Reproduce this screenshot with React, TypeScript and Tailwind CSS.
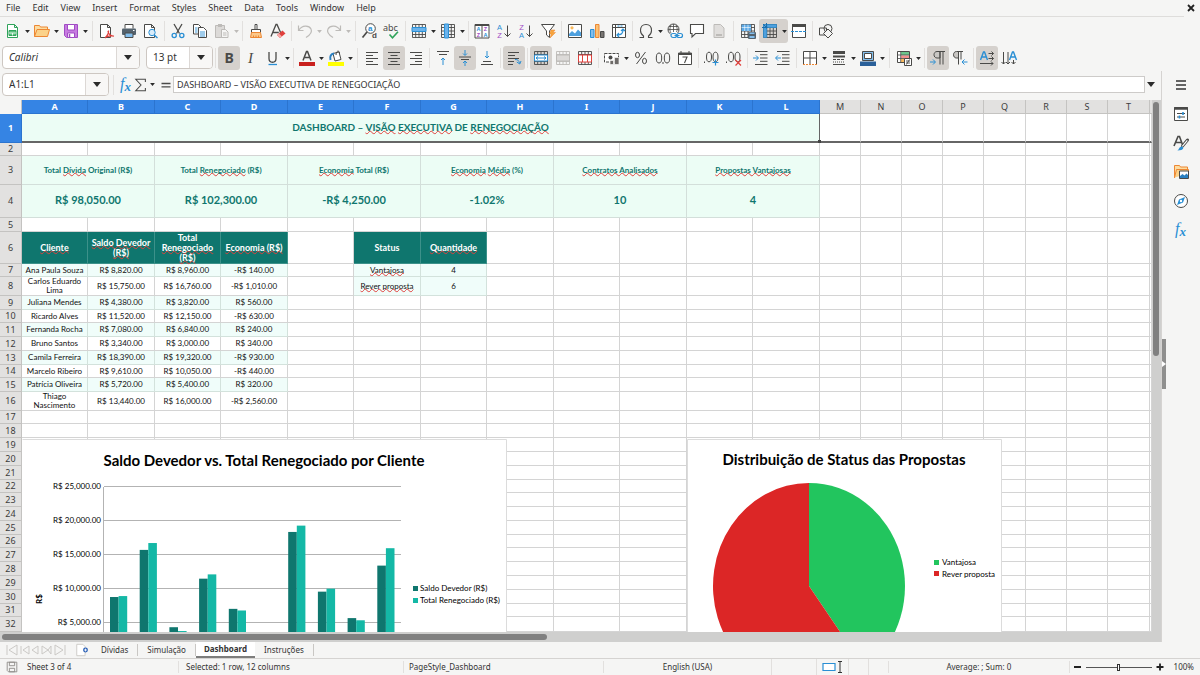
import type { ReactNode } from "react";

const INK = "#4a4a48";
const BLUE = "#2a8fd4";
const SKY = "#83beec";
const ORANGE = "#ed8733";
const RED = "#e0403c";
const GREEN = "#2fa35a";
const PURPLE = "#a04bc4";
const FADED = "#bdbbb8";

/* ---------- icon drawings (16 x 16 grid) ---------- */

const page = (x = 2.5, color = INK) => (
  <path d={`M${x} 1.5h7l3 3v10h-10z M${x + 7} 1.5v3h3`} fill="#fff" stroke={color} />
);

const grid = (color = INK) => (
  <path d="M1.5 1.5h13v13h-13z M1.5 4.5h13 M1.5 8h13 M1.5 11.5h13 M4.7 1.5v13 M8 1.5v13 M11.3 1.5v13" fill="none" stroke={color} strokeWidth="0.9" />
);

const lines = (d: string, color = INK) => <path d={d} stroke={color} fill="none" />;

const ICONS: Record<string, ReactNode> = {
  new: (
    <>
      <path d="M2.5 1.5h7l3 3v10h-10z M9.500 1.500v3h3" fill="#fff" stroke={GREEN} />
      <path d="M4 7.500h7v5h-7z" fill="#5cc07f" stroke={GREEN} />
      <path d="M4 10h7M7.500 10v2.500" stroke="#fff" strokeWidth="0.8" />
    </>
  ),
  open: (
    <>
      <path d="M0.500 13.500v-11h5l1 1.500h7v3" fill="#fcdca0" stroke={ORANGE} />
      <path d="M0.500 13.500l2.500-7h12.500l-2 7z" fill="#fbd28a" stroke={ORANGE} />
    </>
  ),
  save: (
    <>
      <path d="M1.500 1.500h13v13h-11l-2-2z" fill="#c77be0" stroke={PURPLE} />
      <path d="M4.500 1.500h7v5.500h-7z" fill="#fff" stroke={PURPLE} />
      <path d="M4.500 10h7v4.500h-7z" fill="#fff" stroke={PURPLE} />
      <path d="M6.500 11v3" stroke={PURPLE} strokeWidth="1.500" />
    </>
  ),
  pdf: (
    <>
      {page(1.5)}
      <path d="M6 15c2-2 4-5 3.500-7.500M9 8c0 3 3 5.500 6 5M6 14.500c3-2 5-2 9-1.500" fill="none" stroke={RED} strokeWidth="1.200" />
    </>
  ),
  print: (
    <>
      <path d="M4 5.500v-4h8v4" fill="#fff" stroke={INK} />
      <rect x="1" y="5.500" width="14" height="6.500" rx="1" fill="#55636e" />
      <path d="M4 10h8v4.500h-8z" fill={SKY} stroke={INK} />
      <path d="M12 7.500h1.500" stroke="#fff" />
    </>
  ),
  preview: (
    <>
      {page(1.5)}
      <circle cx="9" cy="9.500" r="3.200" fill="#d9ecfa" stroke={BLUE} />
      <path d="M11.300 12l3.200 3" stroke={BLUE} strokeWidth="1.500" />
    </>
  ),
  cut: (
    <>
      <path d="M4 1l5.500 9.500M12 1L6.500 10.500" stroke={INK} strokeWidth="1.300" />
      <circle cx="4.200" cy="12.500" r="2.100" fill="none" stroke={BLUE} strokeWidth="1.300" />
      <circle cx="11.800" cy="12.500" r="2.100" fill="none" stroke={BLUE} strokeWidth="1.300" />
    </>
  ),
  copy: (
    <>
      <path d="M1.500 1.500h5l2.500 2.500v7h-7.500z" fill="#fff" stroke={INK} />
      <path d="M6.500 4.500h5l3 3v7h-8z" fill="#fff" stroke={INK} />
      <path d="M3 5h2.500M3 7h2.500M3 9h2.500M8 9h5M8 11h5M8 13h5" stroke={BLUE} strokeWidth="0.900" />
    </>
  ),
  paste: (
    <>
      <path d="M1.500 2.500h9v12h-9z" fill="#dcdad8" stroke={FADED} />
      <path d="M4 1h4v3h-4z" fill={FADED} />
      <path d="M7.500 6.500h4l2.500 2.500v5.500h-6.500z" fill="#f5f5f4" stroke={FADED} />
      <path d="M9 10h3.500M9 12h3.500" stroke={FADED} />
    </>
  ),
  clone: (
    <>
      <path d="M7 1.500h2v5h-2z" fill="#fff" stroke={INK} />
      <path d="M3.500 6.500h9v3h-9z" fill="#fff" stroke={INK} />
      <path d="M3.500 9.500h9l1 5h-11z" fill="#fbc88a" stroke={ORANGE} />
      <path d="M5.500 14.500v-2M8 14.500v-2M10.500 14.500v-2" stroke={ORANGE} />
    </>
  ),
  clear: (
    <>
      <path d="M1 13.500L6 1.500h1l4 9M2.800 9.500h6" fill="none" stroke={INK} strokeWidth="1.300" />
      <path d="M7 12l5.500-4.500 3 3-5.500 4.500z" fill={RED} />
      <path d="M7 12l2-1.600 3 3-2 1.600z" fill="#f6a9a7" />
    </>
  ),
  undo: <path d="M1.500 2.500v5h5M2 7c3-5 10-5 12-1 1.500 3-1 6-5 8.500" fill="none" stroke={FADED} strokeWidth="1.200" />,
  redo: <path d="M14.500 2.500v5h-5M14 7c-3-5-10-5-12-1-1.500 3 1 6 5 8.500" fill="none" stroke={FADED} strokeWidth="1.200" />,
  find: (
    <>
      <circle cx="8.500" cy="5.500" r="4.800" fill="#fff" stroke={INK} />
      <path d="M5 9l-4.500 5.500" stroke={INK} strokeWidth="1.700" />
      <text x="6" y="8" fontSize="8" fill={BLUE} fontWeight="bold" fontFamily="Liberation Sans">
        a<tspan x="10" y="15" fill={INK}>d</tspan>
      </text>
    </>
  ),
  spell: (
    <>
      <text x="-1" y="7.500" fontSize="9" fill={INK} fontFamily="Noto Sans">abc</text>
      <path d="M5.500 11.500l3 3.300 5.500-6" fill="none" stroke={GREEN} strokeWidth="1.600" />
    </>
  ),
  row: (
    <>
      {grid()}
      <path d="M1 4.500h14v4h-14z" fill="#6bb3ec" stroke={BLUE} />
    </>
  ),
  column: (
    <>
      {grid()}
      <path d="M4.500 1v14h4v-14z" fill="#6bb3ec" stroke={BLUE} />
    </>
  ),
  sort: (
    <>
      <path d="M1 1.500h14v13.500h-14zM8 1.500v13" fill="#fff" stroke={INK} />
      <path d="M1 2h14" stroke={INK} strokeWidth="2" />
      <g fontSize="5.500" fontWeight="bold" fontFamily="Liberation Sans">
        <text x="2.500" y="8" fill={BLUE}>A</text>
        <text x="2.700" y="14.300" fill={PURPLE}>Z</text>
        <text x="9.800" y="8" fill={PURPLE}>Z</text>
        <text x="9.500" y="14.300" fill={BLUE}>A</text>
      </g>
    </>
  ),
  az: (
    <>
      <g fontSize="7.500" fontFamily="Liberation Sans">
        <text x="1" y="6.500" fill={BLUE}>A</text>
        <text x="1.200" y="15.200" fill={PURPLE}>Z</text>
      </g>
      <path d="M11.500 2.500v11M8.500 10.500l3 3 3-3" fill="none" stroke={INK} />
    </>
  ),
  za: (
    <>
      <g fontSize="7.500" fontFamily="Liberation Sans">
        <text x="1.200" y="6.500" fill={PURPLE}>Z</text>
        <text x="1" y="15.200" fill={BLUE}>A</text>
      </g>
      <path d="M11.500 2.500v11M8.500 10.500l3 3 3-3" fill="none" stroke={INK} />
    </>
  ),
  filter: (
    <>
      <path d="M1.500 1.500h13l-5 6.500v6.500l-3-2.500v-4z" fill="#fff" stroke={INK} />
      <path d="M11 7h4l-2 2.500h2.500l-5.500 5.500 1.300-4h-1.800z" fill="#f7a53b" stroke={ORANGE} strokeWidth="0.500" />
    </>
  ),
  image: (
    <>
      <path d="M1.500 1.500h13v13h-13z" fill="#fff" stroke={INK} />
      <path d="M2 13v-2l3-3 3 2.500 3-4 3 3v3.500z" fill="#4ea0de" />
      <circle cx="5" cy="4.800" r="1.600" fill="#f9b95c" />
    </>
  ),
  chart: (
    <>
      <path d="M1.500 6.500h3.500v8h-3.500z" fill={SKY} stroke={BLUE} />
      <path d="M6.500 1.500h3.500v13h-3.500z" fill="#fbc275" stroke={ORANGE} />
      <path d="M11.500 8.500h3.500v6h-3.500z" fill="#787572" stroke={INK} />
    </>
  ),
  pivot: (
    <>
      <path d="M1.500 1.500h13v13h-13zM1.500 4.500h13M4.500 1.500v13" fill="#fff" stroke={INK} />
      <path d="M6.500 12c4 0 5.500-1.500 5.500-5M10 8l2-2 2 2M8 10l-2 2 2 2" fill="none" stroke={BLUE} strokeWidth="1.200" />
      <path d="M6.500 3h6" stroke={BLUE} strokeDasharray="2 1" />
    </>
  ),
  omega: <path d="M1.500 14.500h4v-1.500c-2-1.500-3-3-3-5.500 0-3.500 2-6 5.500-6s5.500 2.500 5.500 6c0 2.500-1 4-3 5.500v1.500h4" fill="none" stroke={INK} strokeWidth="1.100" />,
  link: (
    <>
      <circle cx="6.500" cy="6.500" r="5.500" fill="#fff" stroke={INK} />
      <path d="M1 6.500h11M6.500 1v8M2 3.500h9M4 2c-1.500 3-1.500 6 0 8M9 2c1.500 3 1.500 5 .5 7" fill="none" stroke={INK} strokeWidth="0.800" />
      <rect x="3.500" y="10" width="12" height="5" fill="#f5f5f4" />
      <rect x="4" y="10.500" width="5.500" height="4" rx="2" fill="none" stroke={BLUE} strokeWidth="1.200" />
      <rect x="10" y="10.500" width="5.500" height="4" rx="2" fill="none" stroke={BLUE} strokeWidth="1.200" />
      <path d="M7.500 12.500h5" stroke={BLUE} />
    </>
  ),
  comment: <path d="M1.500 1.500h13v9h-8l-3.500 3.500v-3.500h-1.500z" fill="#fff" stroke={INK} strokeWidth="1.100" />,
  header: (
    <>
      <path d="M3 1.500h6.500l3.500 3.500v9.500h-10z" fill="#e0dedc" stroke={FADED} />
      <path d="M5 11h6v2h-6z" fill={FADED} />
    </>
  ),
  printArea: (
    <>
      {grid()}
      <path d="M1.500 1.500h9.500v6.500h-9.500z" fill="#5ba9e6" />
      <path d="M1.500 4.500h9.500M4.700 1.500v6.500M8 1.500v6.500" stroke="#fff" strokeWidth="0.600" />
      <rect x="8" y="9" width="8" height="7" rx="1" fill="#55636e" />
      <path d="M9.500 9.500h5v1.500h-5zM9.500 13h5v2h-5z" fill={SKY} />
    </>
  ),
  freeze: (
    <>
      {grid()}
      <path d="M1.500 1.500h3.200v13h-3.200zM4.700 1.500h9.800v3h-9.800z" fill="#4ea0de" stroke={BLUE} strokeWidth="0.700" />
      <path d="M0 4.500h5.500M4.500 0v5.500M1 1l3.500 3.500" stroke="#1b6dab" />
    </>
  ),
  split: (
    <>
      <path d="M1.500 1.500h13v13h-13z" fill="#fff" stroke={INK} />
      <path d="M1 2.500h14" stroke={INK} strokeWidth="3" />
      <path d="M0 8.500h16" stroke={BLUE} strokeWidth="1.200" strokeDasharray="3 1" />
    </>
  ),
  shapes: (
    <>
      <path d="M1.500 5h7v7h-7z" fill="none" stroke={INK} />
      <circle cx="10" cy="5.500" r="4" fill="none" stroke={INK} />
      <path d="M10 6l4.500 4.500L10 15l-4.500-4.500z" fill="#f5f5f4" stroke={INK} />
    </>
  ),
  bold: <text x="3.500" y="13" fontSize="14" fontWeight="bold" fill={INK} fontFamily="Noto Sans">B</text>,
  italic: <text x="5" y="13" fontSize="15" fontStyle="italic" fill={INK} fontFamily="Liberation Serif">I</text>,
  underline: (
    <>
      <path d="M4 2v6.500c0 5 7 5 7 0v-6.500" fill="none" stroke={INK} strokeWidth="1.300" />
      <path d="M3.500 14.500h8.500" stroke={BLUE} strokeWidth="1.300" />
    </>
  ),
  fontColor: (
    <>
      <path d="M4 10.500L7.500 1.500h1l3.500 9M5.200 7.500h5.600" fill="none" stroke={INK} strokeWidth="1.500" />
      <path d="M0 12h16v4h-16z" fill="#c9211e" />
    </>
  ),
  fill: (
    <>
      <path d="M5 3.500l6-1.500 2 7.500-6 1.500z" fill="#fff" stroke={INK} />
      <path d="M2.500 10c-1-4 .5-6 3.500-6.500" fill="none" stroke="#2a7fc0" strokeWidth="2" />
      <path d="M8 5c0-5 4-5 3.500-1" fill="none" stroke={INK} />
      <path d="M0 12h16v4h-16z" fill="#ffff00" />
    </>
  ),
  left: lines("M2 2.500h12M2 5.500h7M2 8.500h12M2 11.500h7M2 14.500h12"),
  center: lines("M2 2.500h12M4.500 5.500h7M2 8.500h12M4.500 11.500h7M2 14.500h12"),
  right: lines("M2 2.500h12M7 5.500h7M2 8.500h12M7 11.500h7M2 14.500h12"),
  top: (
    <>
      {lines("M2 1.500h12M4 4.500h8")}
      {lines("M8 15v-7M6 10l2-2 2 2", BLUE)}
    </>
  ),
  middle: (
    <>
      {lines("M2 7h12M4 9.500h8")}
      {lines("M8 0v5M6 3.500l2 2 2-2M8 16v-4.500M6 13l2-2 2 2", BLUE)}
    </>
  ),
  bottom: (
    <>
      {lines("M4 11.500h8M2 14.500h12")}
      {lines("M8 1v7M6 6l2 2 2-2", BLUE)}
    </>
  ),
  wrap: (
    <>
      {lines("M2 2.500h11M2 5.500h7M2 8.500h11M2 11.500h6M2 14.500h5")}
      {lines("M9 9.500c3 0 4 1 4.500 4M10.800 12l3 2 1.200-3", BLUE)}
    </>
  ),
  merge: (
    <>
      {grid()}
      <path d="M1.500 5h13v6h-13z" fill="#fff" stroke={BLUE} />
      {lines("M3 8h10M5 6.500l-2 1.500 2 1.500M11 6.500l2 1.500-2 1.500", BLUE)}
    </>
  ),
  mergeOff: (
    <>
      {grid(FADED)}
      <path d="M1.500 5h13v6h-13z" fill="#dcdad8" stroke={FADED} />
    </>
  ),
  unmerge: (
    <>
      {grid()}
      <path d="M1.500 5h13v7h-13zM5.500 5v7M10.500 5v7" fill="#fff" stroke={RED} />
    </>
  ),
  currency: (
    <>
      <path d="M0.500 3.500h14v8.500h-14z" fill="#fff" stroke={INK} strokeDasharray="3 1" />
      <circle cx="6.500" cy="7.500" r="2" fill={INK} />
      <path d="M6 10.500h3.500v4h-3.500zM10.500 7.500h4.500v7h-4.500z" fill="#6d6a68" stroke="#f5f5f4" strokeWidth="0.700" />
    </>
  ),
  percent: (
    <>
      <ellipse cx="4.500" cy="5" rx="2" ry="2.700" fill="none" stroke={INK} />
      <ellipse cx="11.500" cy="11" rx="2" ry="2.700" fill="none" stroke={INK} />
      <path d="M12.500 2l-9 12" stroke={INK} />
    </>
  ),
  number: (
    <>
      <ellipse cx="4" cy="8" rx="2.700" ry="5" fill="none" stroke={INK} />
      <ellipse cx="12" cy="8" rx="2.700" ry="5" fill="none" stroke={INK} />
      <path d="M8 12v2" stroke={INK} />
    </>
  ),
  date: (
    <>
      <path d="M1.500 3h13v11.500h-13z" fill="#fff" stroke={INK} />
      <path d="M1.500 4h13" stroke={INK} strokeWidth="2" />
      <path d="M4 1v3M12 1v3" stroke={INK} />
      <path d="M5.500 7h4.500l-2.500 6" fill="none" stroke={INK} strokeWidth="1.100" />
    </>
  ),
  addDecimal: (
    <>
      <path d="M0.500 11.500v1.500" stroke={INK} />
      <ellipse cx="5" cy="7" rx="2.500" ry="4.800" fill="none" stroke={INK} />
      <ellipse cx="11.500" cy="7" rx="2.500" ry="4.800" fill="none" stroke={INK} />
      <path d="M8.500 12.500h6M11.500 9.500v6" stroke={BLUE} strokeWidth="1.200" />
    </>
  ),
  removeDecimal: (
    <>
      <path d="M0.500 11.500v1.500" stroke={INK} />
      <ellipse cx="5" cy="7" rx="2.500" ry="4.800" fill="none" stroke={INK} />
      <ellipse cx="11.500" cy="7" rx="2.500" ry="4.800" fill="none" stroke={INK} />
      <path d="M9.500 10l5.500 5.500M15 10l-5.500 5.500" stroke={RED} strokeWidth="1.200" />
    </>
  ),
  indent: (
    <>
      {lines("M2 1.500h12.500M7 4.700h7.500M7 8h7.500M7 11.300h7.500M2 14.500h12.500")}
      {lines("M0 8h5M3 5.500l2.500 2.500-2.500 2.500", BLUE)}
    </>
  ),
  outdent: (
    <>
      {lines("M2 1.500h12.500M7 4.700h7.500M7 8h7.500M7 11.300h7.500M2 14.500h12.500")}
      {lines("M6 8h-5M3 5.500l-2.500 2.500 2.500 2.500", BLUE)}
    </>
  ),
  borders: (
    <>
      <path d="M1.500 14.500v-13h13v13M8 1.500v13M1.500 8h13" fill="#fff" stroke={INK} />
      <path d="M1 14.500h14" stroke={ORANGE} strokeDasharray="2 1" />
    </>
  ),
  borderStyle: (
    <>
      <path d="M2 2.500h12" stroke={INK} strokeWidth="3" />
      <path d="M2 6.500h12" stroke={INK} strokeWidth="2" />
      <path d="M2 9.500h12" stroke={INK} strokeDasharray="3 1" />
      <path d="M2 12h12" stroke={INK} strokeDasharray="1 1" />
      <path d="M2 14.500h12" stroke={INK} />
    </>
  ),
  borderColor: (
    <>
      <path d="M2.500 1.500h11v9h-11z" fill={SKY} stroke={INK} />
      <path d="M4.500 3.500h7v5h-7z" fill="#fff" stroke={INK} />
      <path d="M0 11.500h16v4.500h-16z" fill="#2a6099" />
    </>
  ),
  conditional: (
    <>
      <path d="M1.500 1.500h12v11h-12z" fill="#fff" stroke={INK} />
      <path d="M5 2h8v3h-8z" fill="#6cc58c" />
      <path d="M5 5.500h8v3h-8z" fill="#f3908d" />
      <path d="M5 9h4v3h-4z" fill="#f9b95c" />
      <path d="M1.500 5h12M1.500 8.500h12M4.700 1.500v11" stroke={INK} strokeWidth="0.800" />
      <path d="M8.500 8.500h7v7h-7z" fill="#fff" stroke={INK} />
      <path d="M10 11h4M10 13h4M13.500 9.500l-3 5" stroke={INK} strokeWidth="0.900" />
    </>
  ),
  ltr: (
    <>
      <path d="M10 1.500h-3c-4 0-4 6.500 0 6.500h3z" fill="#c9c7c4" stroke={INK} />
      <path d="M10 1.500v13M13 1.500v13M15 1.500h-7" fill="none" stroke={INK} />
      {lines("M0 12h5M3 9.500l2.500 2.500-2.500 2.500", BLUE)}
    </>
  ),
  rtl: (
    <>
      <path d="M6.500 1.500h-2c-4 0-4 6.500 0 6.500h2z" fill="#c9c7c4" stroke={INK} />
      <path d="M6.500 1.500v13M9 1.500v8M11 1.500h-6" fill="none" stroke={INK} />
      {lines("M15.500 12h-5M12.500 9.500l-2.500 2.500 2.500 2.500", BLUE)}
    </>
  ),
  horizontal: (
    <>
      <path d="M1.500 10l3-8h1l3 8M2.700 7h4.600" fill="none" stroke={BLUE} strokeWidth="1.400" />
      {lines("M9.500 3.500h5M12.500 1.500l2 2-2 2M9.500 8.500h5M12.500 6.500l2 2-2 2M1 13.500h13M12 11.500l2 2-2 2")}
    </>
  ),
  vertical: (
    <>
      <path d="M8.500 10l3-8h1l3 8M9.700 7h4.600" fill="none" stroke={BLUE} strokeWidth="1.400" />
      {lines("M2.500 2v12M0.500 12l2 2 2-2M7 2v12M5 12l2 2 2-2M12.500 10v4M10.500 12l2 2 2-2")}
    </>
  ),
  fx: (
    <text x="2" y="12" fontSize="16" fill={BLUE} fontFamily="Liberation Serif" fontStyle="italic">
      f<tspan dy="2" fontSize="13" fontWeight="bold">x</tspan>
    </text>
  ),
  sigma: <path d="M13 4.500v-3h-11l6 6.500-6 6.500h11v-3" fill="none" stroke={INK} strokeWidth="1.200" />,
  equals: <path d="M2 6h12M2 10.500h12" stroke={INK} strokeWidth="1.800" />,
  menu: <path d="M3 4h10M3 8h10M3 12h10" stroke="#333" strokeWidth="1.500" />,
  properties: (
    <>
      <path d="M1.500 1.500h13v13h-13z" fill="#fff" stroke={INK} />
      <path d="M1 2.500h14" stroke={INK} strokeWidth="2.500" />
      <path d="M4 7.500h8M4 11h8" stroke={INK} />
      <path d="M10 6v3M6.500 9.500v3" stroke={BLUE} strokeWidth="1.600" />
    </>
  ),
  styles: (
    <>
      <path d="M1 11L5 1.500h1.500l3.500 9.500M2.500 7.500h6" fill="none" stroke={INK} strokeWidth="1.600" />
      <path d="M14.500 5l-5 6" stroke={INK} strokeWidth="3" strokeLinecap="round" />
      <path d="M14.300 5.300l-5 6" stroke="#fff" strokeWidth="1.200" />
      <path d="M4 15.500c2 0 2-4 4.500-4s3.500 4-4.500 4z" fill={BLUE} />
    </>
  ),
  gallery: (
    <>
      <path d="M1.500 14v-12.500h5l1 1.500h7v3" fill="#fcdca0" stroke={ORANGE} />
      <path d="M1.500 13.500l2-8h12v4" fill="#fbd28a" stroke={ORANGE} />
      <path d="M6.500 7h9v7.500h-9z" fill="#fff" stroke={INK} />
      <path d="M7 14v-2l2.500-2 2 1.500 2-2 1.500 1.500v3z" fill="#2a7fc0" />
    </>
  ),
  navigator: (
    <>
      <circle cx="8" cy="8" r="6.500" fill="#fff" stroke={INK} />
      <path d="M12 4l-2 5.500-6 2.500 2-5.500z" fill={BLUE} />
      <circle cx="8" cy="8" r="1.200" fill="#fff" />
    </>
  ),
  close: <path d="M6 5l6 6M12 5l-6 6" stroke="#222" strokeWidth="1.800" />,
  savedState: (
    <>
      <path d="M2.500 2.500h11v11h-9.500l-1.500-1.500z" fill="#f5f5f4" stroke="#8b8986" />
      <path d="M5 2.500h6v4h-6zM5 9.500h6v4h-6z" fill="none" stroke="#8b8986" />
    </>
  ),
  addSheet: (
    <>
      <path d="M2 1.500h7l2.500 2.500v10.500h-9.500z" fill="#fff" stroke="#c9c7c4" />
      <circle cx="12" cy="8" r="2.800" fill="#2c62b8" />
      <path d="M10.400 8h3.200M12 6.400v3.200" stroke="#fff" />
    </>
  ),
  selection: <path d="M2 4.500h12v7h-12z" fill="#fff" stroke={BLUE} strokeWidth="1.200" />,
};

function Icon({ name }: { name: string }) {
  return (
    <svg viewBox="0 0 16 16" className="size-4 shrink-0 overflow-visible" aria-hidden="true">
      {ICONS[name]}
    </svg>
  );
}

function Caret({ faded = false, large = false }: { faded?: boolean; large?: boolean }) {
  return (
    <svg viewBox="0 0 8 5" className={large ? "h-[5px] w-2" : "h-[3px] w-[5px]"} aria-hidden="true">
      <path d="M0 0h8L4 5z" fill={faded ? FADED : "#2b2b2b"} />
    </svg>
  );
}

/* ---------- toolbars ---------- */

type Tool = { icon: string; label: string; drop?: boolean; on?: boolean; off?: boolean } | "sep" | "gap";

const STANDARD: Tool[] = [
  { icon: "new", label: "New", drop: true },
  { icon: "open", label: "Open", drop: true },
  { icon: "save", label: "Save", drop: true },
  "gap",
  { icon: "pdf", label: "Export as PDF" },
  { icon: "print", label: "Print" },
  { icon: "preview", label: "Print Preview" },
  "sep",
  { icon: "cut", label: "Cut" },
  { icon: "copy", label: "Copy" },
  { icon: "paste", label: "Paste", drop: true, off: true },
  "sep",
  { icon: "clone", label: "Clone Formatting" },
  { icon: "clear", label: "Clear Formatting" },
  "sep",
  { icon: "undo", label: "Undo", drop: true, off: true },
  { icon: "redo", label: "Redo", drop: true, off: true },
  "gap",
  { icon: "find", label: "Find and Replace" },
  { icon: "spell", label: "Spelling" },
  "sep",
  { icon: "row", label: "Row", drop: true },
  { icon: "column", label: "Column", drop: true },
  "sep",
  { icon: "sort", label: "Sort" },
  { icon: "az", label: "Sort Ascending" },
  { icon: "za", label: "Sort Descending" },
  { icon: "filter", label: "AutoFilter" },
  "sep",
  { icon: "image", label: "Insert Image" },
  { icon: "chart", label: "Insert Chart" },
  { icon: "pivot", label: "Pivot Table" },
  "sep",
  { icon: "omega", label: "Special Character", drop: true },
  { icon: "link", label: "Insert Hyperlink" },
  { icon: "comment", label: "Insert Comment" },
  { icon: "header", label: "Headers and Footers", off: true },
  "gap",
  { icon: "printArea", label: "Define Print Area" },
  { icon: "freeze", label: "Freeze Rows and Columns", drop: true, on: true },
  { icon: "split", label: "Split Window" },
  "sep",
  { icon: "shapes", label: "Show Draw Functions" },
];

const FORMATTING: Tool[] = [
  { icon: "bold", label: "Bold", on: true },
  { icon: "italic", label: "Italic" },
  { icon: "underline", label: "Underline", drop: true },
  "sep",
  { icon: "fontColor", label: "Font Color", drop: true },
  { icon: "fill", label: "Background Color", drop: true },
  "gap",
  { icon: "left", label: "Align Left" },
  { icon: "center", label: "Center Horizontally", on: true },
  { icon: "right", label: "Align Right" },
  "sep",
  { icon: "top", label: "Align Top" },
  { icon: "middle", label: "Center Vertically", on: true },
  { icon: "bottom", label: "Align Bottom" },
  "sep",
  { icon: "wrap", label: "Wrap Text", on: true },
  "sep",
  { icon: "merge", label: "Merge and Center", on: true },
  { icon: "mergeOff", label: "Merge Cells", off: true },
  { icon: "unmerge", label: "Unmerge Cells" },
  "sep",
  { icon: "currency", label: "Format as Currency", drop: true },
  { icon: "percent", label: "Format as Percent" },
  { icon: "number", label: "Format as Number" },
  { icon: "date", label: "Format as Date" },
  "sep",
  { icon: "addDecimal", label: "Add Decimal Place" },
  { icon: "removeDecimal", label: "Delete Decimal Place" },
  "sep",
  { icon: "indent", label: "Increase Indent" },
  { icon: "outdent", label: "Decrease Indent" },
  "sep",
  { icon: "borders", label: "Borders", drop: true },
  { icon: "borderStyle", label: "Border Style", drop: true },
  { icon: "borderColor", label: "Border Color", drop: true },
  "gap",
  { icon: "conditional", label: "Conditional Formatting", drop: true },
  "sep",
  { icon: "ltr", label: "Left-To-Right", on: true },
  { icon: "rtl", label: "Right-To-Left" },
  "sep",
  { icon: "horizontal", label: "Text direction from left to right", on: true },
  { icon: "vertical", label: "Text direction from top to bottom" },
];

function Tools({ items }: { items: Tool[] }) {
  return (
    <>
      {items.map((t, i) =>
        typeof t === "string" ? (
          <span key={i} className={t === "sep" ? "flex w-[5px] shrink-0 justify-center" : "flex w-[7px] shrink-0 justify-center"}>
            <span className="h-5 w-px bg-[#e2e0de]" />
          </span>
        ) : (
          <span key={i} className={t.on ? "flex h-6 shrink-0 rounded-[3px] bg-[#d5d1cd]" : "flex h-6 shrink-0"}>
            <button type="button" aria-label={t.label} aria-pressed={t.on} disabled={t.off} className="flex w-[22px] items-center justify-center">
              <Icon name={t.icon} />
            </button>
            {t.drop && (
              <button type="button" aria-label={`${t.label} options`} disabled={t.off} className="flex w-[7px] items-center justify-center pt-0.5">
                <Caret faded={t.off} />
              </button>
            )}
          </span>
        ),
      )}
    </>
  );
}

function Combo({ label, value, className, italic }: { label: string; value: string; className: string; italic?: boolean }) {
  return (
    <div className={`flex h-[23px] shrink-0 overflow-hidden rounded border border-[#cdc7c2] bg-white ${className}`}>
      <input aria-label={label} defaultValue={value} className={italic ? "min-w-0 flex-1 px-1.5 italic outline-none" : "min-w-0 flex-1 px-1.5 outline-none"} />
      <button type="button" aria-label={`${label} list`} className="flex w-[23px] items-center justify-center border-l border-[#dcd8d5] bg-[#f8f7f6]">
        <Caret large />
      </button>
    </div>
  );
}

/* ---------- sheet ---------- */

const LETTERS = "ABCDEFGHIJKLMNOPQRST".split("");
const COL_WIDTHS = [66, 67, 66, 67, 66, 67, 66, 67, 66, 67, 66, 67, 41, 41, 41, 41, 42, 41, 41, 42];
const ROW_HEIGHTS = [29, 13, 29, 33, 14, 32, 13, 19, 14, 13, 14, 14, 14, 13, 14, 19, 13, 14, 14, 14, 14, 13, 14, 14, 14, 13, 14, 14, 14, 14, 13, 15];

const CLIENTS: [string, number, number][] = [
  ["Ana Paula Souza", 8820, 8960],
  ["Carlos Eduardo Lima", 15750, 16760],
  ["Juliana Mendes", 4380, 3820],
  ["Ricardo Alves", 11520, 12150],
  ["Fernanda Rocha", 7080, 6840],
  ["Bruno Santos", 3340, 3000],
  ["Camila Ferreira", 18390, 19320],
  ["Marcelo Ribeiro", 9610, 10050],
  ["Patrícia Oliveira", 5720, 5400],
  ["Thiago Nascimento", 13440, 16000],
];

const money = (n: number) =>
  `${n < 0 ? "-" : ""}R$ ${Math.abs(n).toLocaleString("en-US", { minimumFractionDigits: 2 })}`;

function W({ children }: { children: ReactNode }) {
  return (
    <span className="underline decoration-[#e0403c] decoration-wavy decoration-1 underline-offset-[-1px] [text-decoration-skip-ink:none]">{children}</span>
  );
}

type CellSpec = { span?: number; content?: ReactNode; style: string };

const KPIS: [ReactNode, string][] = [
  [<>Total <W>Dívida</W> Original (R$)</>, "R$ 98,050.00"],
  [<>Total <W>Renegociado</W> (R$)</>, "R$ 102,300.00"],
  [<><W>Economia</W> Total (R$)</>, "-R$ 4,250.00"],
  [<><W>Economia</W> <W>Média</W> (%)</>, "-1.02%"],
  [<W>Contratos Analisados</W>, "10"],
  [<W>Propostas Vantajosas</W>, "4"],
];

const EMPTY = "border-[#d4d4d4] border-b";
const HEAD = "border-[#3c918a] border-b bg-[#0f766e] font-bold text-white text-[9px] leading-[10px]";
const MINT = "border-[#d3e2dc] border-b bg-[#f0fdfa] text-[8px] leading-[9px] text-[#111]";
const PLAIN = "border-[#d4d4d4] border-b bg-white text-[8px] leading-[9px] text-[#111]";

function cellsFor(row: number): CellSpec[] {
  const out: CellSpec[] = [];
  if (row === 1) {
    out.push({
      span: 12,
      style: "relative border-[#666] border-b-2 bg-[#ecfdf5] pb-0.5 text-[10px] leading-4 font-bold text-[#0f766e]",
      content: (
        <>
          DASHBOARD – <W>VISÃO</W> <W>EXECUTIVA</W> DE <W>RENEGOCIAÇÃO</W>
          <span className="absolute -right-0.5 -bottom-0.5 size-[3px] bg-[#444]" />
        </>
      ),
    });
  } else if (row === 3 || row === 4) {
    KPIS.forEach(([name, value]) =>
      out.push(
        row === 3
          ? { span: 2, content: name, style: "border-[#d3dfda] border-b bg-[#ecfdf5] text-[8px] leading-3 font-bold text-[#0f766e]" }
          : { span: 2, content: value, style: "border-[#d3dfda] border-b bg-[#ecfdf5] pb-0.5 text-[11px] leading-4 font-bold text-[#0f766e]" },
      ),
    );
  } else {
    for (let c = 0; c < 12; c++) out.push({ style: EMPTY });
    if (row === 6) {
      [
        <W>Cliente</W>,
        <W>Saldo Devedor (R$)</W>,
        <>Total <W>Renegociado (R$)</W></>,
        <W>Economia (R$)</W>,
      ].forEach((content, c) => (out[c] = { content, style: HEAD }));
      out[5] = { content: "Status", style: HEAD };
      out[6] = { content: <W>Quantidade</W>, style: HEAD };
    }
    if (row >= 7 && row <= 16) {
      const [name, debt, total] = CLIENTS[row - 7];
      const style = row % 2 ? MINT : PLAIN;
      [name, money(debt), money(total), money(debt - total)].forEach((content, c) => (out[c] = { content, style }));
    }
    if (row === 7 || row === 8) {
      out[5] = { content: <W>{row === 7 ? "Vantajosa" : "Rever proposta"}</W>, style: MINT };
      out[6] = { content: row === 7 ? "4" : "6", style: MINT };
    }
  }
  for (let c = 12; c < 21; c++) out.push({ style: row === 1 ? "border-r-[#d4d4d4] border-b-2 border-b-[#666]" : EMPTY });
  return out;
}

function Sheet() {
  return (
    <table className="w-full table-fixed border-separate border-spacing-0 bg-white text-center">
      <colgroup>
        <col className="w-[22px]" />
        {COL_WIDTHS.map((w, i) => (
          <col key={i} style={{ width: w }} />
        ))}
        <col />
      </colgroup>
      <thead>
        <tr className="h-[14px] font-[Noto_Sans] text-[9px] leading-3">
          <th className="border-r border-[#c4c3c1] bg-[#f5f5f4] p-0" />
          {LETTERS.map((l, i) => (
            <th
              key={l}
              className={
                i < 12
                  ? "border-r border-b border-[#2b74cf] bg-[#3584e4] p-0 font-bold text-white"
                  : "border-r border-b border-[#c4c3c1] bg-[#e2e1e0] p-0 font-normal text-[#3c3c3c]"
              }
            >
              {l}
            </th>
          ))}
          <th className="border-b border-[#c4c3c1] bg-[#e2e1e0] p-0" />
        </tr>
      </thead>
      <tbody>
        {ROW_HEIGHTS.map((h, i) => (
          <tr key={i} style={{ height: h }}>
            <th
              className={
                i === 0
                  ? "border-r border-b border-[#2b74cf] bg-[#3584e4] p-0 font-[Noto_Sans] text-[9px] leading-3 font-bold text-white"
                  : "border-r border-b border-[#c4c3c1] bg-[#e2e1e0] p-0 font-[Noto_Sans] text-[9px] leading-3 font-normal text-[#3c3c3c]"
              }
            >
              {i + 1}
            </th>
            {cellsFor(i + 1).map((c, k) => (
              <td key={k} colSpan={c.span} className={`border-r px-0 pt-0 align-middle ${c.style}`}>
                {c.content}
              </td>
            ))}
          </tr>
        ))}
      </tbody>
    </table>
  );
}

/* ---------- charts ---------- */

function BarChart() {
  const left = 82;
  const zero = 218;
  const step = 34;
  const y = (v: number) => zero - (v / 5000) * step;
  return (
    <svg viewBox="0 0 485 260" width="485" height="260" className="bg-white" role="img" aria-label="Saldo Devedor vs. Total Renegociado por Cliente">
      <path d="M0.500 0.500h484v260" fill="none" stroke="#dcdcdc" />
      <text x="242" y="27" textAnchor="middle" fontSize="15" fontWeight="bold">Saldo Devedor vs. Total Renegociado por Cliente</text>
      {[5000, 10000, 15000, 20000, 25000].map((v) => (
        <g key={v}>
          <path d={`M${left} ${y(v) - 0.5}h297`} stroke="#b3b3b3" />
          <text x={left - 3} y={y(v) + 2} textAnchor="end" fontSize="8">{money(v)}</text>
        </g>
      ))}
      <path d={`M${left - 0.5} ${y(25000)}V${zero}`} stroke="#b3b3b3" />
      {CLIENTS.map(([name, debt, total], i) => (
        <g key={name}>
          <rect x={left + 6 + i * 29.7} y={y(debt)} width="8.600" height={zero - y(debt)} fill="#0f766e" />
          <rect x={left + 14.6 + i * 29.7} y={y(total)} width="8.600" height={zero - y(total)} fill="#14b8a6" />
        </g>
      ))}
      <text transform="translate(20 160) rotate(-90)" textAnchor="middle" fontSize="8" fontWeight="bold">R$</text>
      <rect x="391" y="147" width="5" height="5" fill="#0f766e" />
      <text x="398" y="152" fontSize="8">Saldo Devedor (R$)</text>
      <rect x="391" y="159" width="5" height="5" fill="#14b8a6" />
      <text x="398" y="164" fontSize="8">Total Renegociado (R$)</text>
    </svg>
  );
}

function PieChart() {
  const cx = 122;
  const cy = 147;
  const rx = 96;
  const ry = 103;
  const a = 0.4 * 2 * Math.PI;
  const ex = cx + rx * Math.sin(a);
  const ey = cy - ry * Math.cos(a);
  return (
    <svg viewBox="0 0 315 260" width="315" height="260" className="bg-white" role="img" aria-label="Distribuição de Status das Propostas">
      <path d="M0.500 260v-259.500h314v260" fill="none" stroke="#dcdcdc" />
      <text x="157" y="26" textAnchor="middle" fontSize="15" fontWeight="bold">Distribuição de Status das Propostas</text>
      <path d={`M${cx} ${cy}V${cy - ry}A${rx} ${ry} 0 0 1 ${ex} ${ey}z`} fill="#22c55e" />
      <path d={`M${cx} ${cy}V${cy - ry}A${rx} ${ry} 0 1 0 ${ex} ${ey}z`} fill="#dc2626" />
      <rect x="247" y="121" width="5" height="5" fill="#22c55e" />
      <text x="255" y="126" fontSize="8">Vantajosa</text>
      <rect x="247" y="132" width="5" height="5" fill="#dc2626" />
      <text x="255" y="138" fontSize="8">Rever proposta</text>
    </svg>
  );
}

/* ---------- application ---------- */

const MENUS = ["File", "Edit", "View", "Insert", "Format", "Styles", "Sheet", "Data", "Tools", "Window", "Help"];
const SIDEBAR = [
  ["menu", "Sidebar Settings"],
  ["properties", "Properties"],
  ["styles", "Styles"],
  ["gallery", "Gallery"],
  ["navigator", "Navigator"],
  ["fx", "Functions"],
];

export default function App() {
  return (
    <div className="flex h-screen flex-col overflow-hidden bg-[#f5f5f4] font-['Noto_Sans',sans-serif] text-[10px] text-[#333]">
      <header className="flex h-4 shrink-0 items-center justify-between pr-0.5">
        <nav className="flex text-[9px]">
          {MENUS.map((m) => (
            <button key={m} type="button" className="px-1.5">
              {m}
            </button>
          ))}
        </nav>
        <button type="button" aria-label="Close document">
          <Icon name="close" />
        </button>
      </header>

      <div role="toolbar" aria-label="Standard" className="mr-4 flex h-7 shrink-0 items-center border-t border-[#dedddb] pl-0.5">
        <Tools items={STANDARD} />
      </div>

      <div role="toolbar" aria-label="Formatting" className="flex h-[27px] shrink-0 items-center pl-0.5">
        <Combo label="Font Name" value="Calibri" italic className="w-[138px]" />
        <Combo label="Font Size" value="13 pt" className="ml-1.5 w-[67px]" />
        <span className="mx-0.5 h-5 w-px bg-[#e2e0de]" />
        <Tools items={FORMATTING} />
      </div>

      <div className="flex min-h-0 flex-1">
        <main className="flex min-w-0 flex-1 flex-col">
          <div className="flex h-[29px] shrink-0 items-center pb-0.5 pl-0.5">
            <Combo label="Name Box" value="A1:L1" className="w-[107px]" />
            <span className="mx-1 h-5 w-px bg-[#e2e0de]" />
            <button type="button" aria-label="Function Wizard" className="flex w-4 justify-center">
              <Icon name="fx" />
            </button>
            <button type="button" aria-label="Select Function" className="flex w-6 items-center">
              <svg viewBox="0 0 16 16" className="size-3.5" aria-hidden="true">{ICONS.sigma}</svg>
              <span className="pl-0.5"><Caret /></span>
            </button>
            <button type="button" aria-label="Formula" className="flex w-[15px] justify-center">
              <svg viewBox="0 0 16 16" className="size-3" aria-hidden="true">{ICONS.equals}</svg>
            </button>
            <input
              aria-label="Input line"
              defaultValue="DASHBOARD – VISÃO EXECUTIVA DE RENEGOCIAÇÃO"
              className="h-[17px] min-w-0 flex-1 border border-[#cdcbc9] bg-white px-[3px] font-['Noto_Sans',sans-serif] text-[9px] outline-none"
            />
            <button type="button" aria-label="Expand Formula Bar" className="mr-1 flex w-3 justify-center">
              <Caret large />
            </button>
          </div>

          <div className="flex min-h-0 flex-1">
            <div className="relative min-w-0 flex-1 overflow-hidden bg-white font-[Lato,sans-serif]">
              <Sheet />
              <div className="absolute top-[339px] left-[22px]">
                <BarChart />
              </div>
              <div className="absolute top-[339px] left-[687px]">
                <PieChart />
              </div>
            </div>
            <div className="w-[9px] shrink-0 bg-[#cfcfce] px-px pt-0.5">
              <div className="h-[48%] w-1.5 rounded-full bg-[#808080]" />
            </div>
          </div>
          <div className="h-[10px] shrink-0 bg-[#cfcfce] py-0.5 pl-0.5">
            <div className="h-1.5 w-[47%] rounded-full bg-[#808080]" />
          </div>
        </main>

        <aside className="relative flex w-[39px] shrink-0 flex-col items-center gap-[13px] border-l border-[#d5d3d1] pt-1.5">
          {SIDEBAR.map(([icon, label]) => (
            <button key={icon} type="button" aria-label={label}>
              <Icon name={icon} />
            </button>
          ))}
          <button type="button" aria-label="Hide sidebar" className="absolute top-[268px] left-0 flex h-[50px] w-1 items-center justify-center bg-[#8f8f8e]">
            <svg viewBox="0 0 4 6" className="h-1.5 w-1" aria-hidden="true">
              <path d="M0 0l4 3-4 3z" fill="#fff" />
            </svg>
          </button>
        </aside>
      </div>

      <div className="flex h-4 shrink-0 items-center pl-1.5 text-[8px]">
        <svg viewBox="0 0 60 12" className="h-3 w-[60px]" aria-hidden="true">
          <path
            d="M1 1v10M11 1L3 6l8 5zM15 2v8M23 2l-6 4 6 4zM32 2l-6 4 6 4zM36 2l6 4-6 4zM45 2l-3 4 3 4zM49 1l8 5-8 5zM59 1v10"
            fill="none"
            stroke="#cbc9c6"
          />
        </svg>
        <button type="button" aria-label="Add sheet" className="ml-1.5 flex w-5 justify-center">
          <svg viewBox="0 0 16 16" className="size-[14px]" aria-hidden="true">{ICONS.addSheet}</svg>
        </button>
        {["Dívidas", "Simulação", "Dashboard", "Instruções"].map((t) => (
          <button
            key={t}
            type="button"
            className={
              t === "Dashboard"
                ? "h-4 border-b-2 border-[#7d7d7c] bg-white px-2 leading-[14px] font-bold"
                : "h-3 border-r border-[#c9c7c4] px-[9px] leading-3"
            }
          >
            {t}
          </button>
        ))}
      </div>

      <footer className="flex h-[17px] shrink-0 items-center border-t border-[#d5d3d1] text-[8px]">
        <span className="flex w-[27px] justify-center pr-1">
          <svg viewBox="0 0 16 16" className="size-3.5" aria-hidden="true">{ICONS.savedState}</svg>
        </span>
        <span className="w-[151px]">Sheet 3 of 4</span>
        <span className="w-[225px] border-l border-[#e2e0de] pl-[7px]">Selected: 1 row, 12 columns</span>
        <span className="w-[200px] border-l border-[#e2e0de] pl-[5px]">PageStyle_Dashboard</span>
        <span className="w-[168px] border-l border-[#e2e0de] text-center">English (USA)</span>
        <span className="w-[45px] self-stretch border-l border-[#e2e0de]" />
        <span className="flex w-8 items-center border-l border-[#e2e0de] pl-1">
          <Icon name="selection" />
          <svg viewBox="0 0 6 12" className="h-3 w-1.5" aria-hidden="true">
            <path d="M1 .5h4M1 11.500h4M3 .5v11" stroke="#333" />
          </svg>
        </span>
        <span className="w-5 self-stretch border-l border-[#e2e0de]" />
        <span className="w-5 self-stretch border-l border-[#e2e0de]" />
        <span className="flex-1 border-l border-[#e2e0de] text-center">Average: ; Sum: 0</span>
        <span className="flex items-center gap-1 border-l border-[#e2e0de] pr-1.5 pl-1">
          <button type="button" aria-label="Zoom out" className="flex size-2 items-center">
            <span className="h-0.5 w-[7px] bg-[#222]" />
          </button>
          <input
            type="range"
            aria-label="Zoom"
            min="0"
            max="100"
            defaultValue="50"
            className="h-2 w-[66px] appearance-none bg-transparent [&::-webkit-slider-runnable-track]:h-px [&::-webkit-slider-runnable-track]:bg-[#555] [&::-webkit-slider-thumb]:-mt-[3px] [&::-webkit-slider-thumb]:h-[7px] [&::-webkit-slider-thumb]:w-[3px] [&::-webkit-slider-thumb]:appearance-none [&::-webkit-slider-thumb]:border [&::-webkit-slider-thumb]:border-[#333] [&::-webkit-slider-thumb]:bg-white"
          />
          <button type="button" aria-label="Zoom in">
            <svg viewBox="0 0 8 8" className="size-2" aria-hidden="true">
              <path d="M0.500 4h7M4 0.500v7" stroke="#222" strokeWidth="1.800" />
            </svg>
          </button>
          <span className="pl-1.5">100%</span>
        </span>
      </footer>
    </div>
  );
}
